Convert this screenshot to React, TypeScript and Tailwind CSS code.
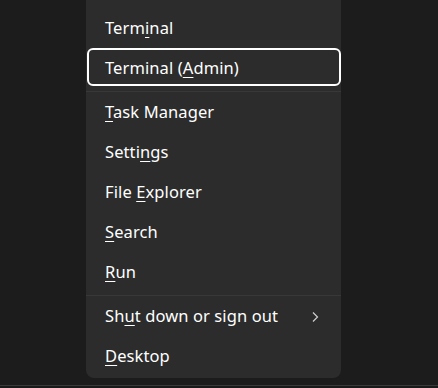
const items: { pre: string; key: string; post: string; sepBefore?: boolean; focused?: boolean; sub?: boolean }[] = [
  { pre: 'Term', key: 'i', post: 'nal' },
  { pre: 'Terminal (', key: 'A', post: 'dmin)', focused: true },
  { pre: '', key: 'T', post: 'ask Manager', sepBefore: true },
  { pre: 'Setti', key: 'n', post: 'gs' },
  { pre: 'File ', key: 'E', post: 'xplorer' },
  { pre: '', key: 'S', post: 'earch' },
  { pre: '', key: 'R', post: 'un' },
  { pre: 'Sh', key: 'u', post: 't down or sign out', sepBefore: true, sub: true },
  { pre: '', key: 'D', post: 'esktop' },
];

export default function App() {
  return (
    <div
      className="flex h-[388px] w-[438px] flex-col overflow-hidden bg-[#1c1c1c] text-white"
      style={{ fontFamily: '"Noto Sans", "Open Sans", sans-serif' }}
    >
      <div className="ml-[86px] w-[255px] rounded-b-[8px] bg-[#2c2c2c] pt-[9px] pb-[1px]">
        {items.map((item) => (
          <div key={item.pre + item.key + item.post}>
            {item.sepBefore && (
              <div className="flex h-1 items-center">
                <div className="h-px w-full bg-[#383838]" />
              </div>
            )}
            <div className="relative flex h-10 items-center pb-[2px] pl-[19px] pr-[22px] text-[16.5px] tracking-[0.1px]">
              {item.focused && (
                <div className="absolute top-[-1px] right-0 bottom-[3px] left-[1px] rounded-[6px] border-2 border-white" />
              )}
              <span className="flex-1">
                {item.pre}
                <span className="underline decoration-1 underline-offset-[3px]">{item.key}</span>
                {item.post}
              </span>
              {item.sub && (
                <svg width="8" height="12" viewBox="0 0 8 12" className="mt-[2px] text-[#d0d0d0]">
                  <path d="M2 1.5 L6.5 6 L2 10.5" fill="none" stroke="currentColor" strokeWidth="1.2" />
                </svg>
              )}
            </div>
          </div>
        ))}
      </div>
      <div className="mt-[7px] flex-1 border-t border-[#3a3a3a] bg-[#1a1a1a]" />
    </div>
  );
}
